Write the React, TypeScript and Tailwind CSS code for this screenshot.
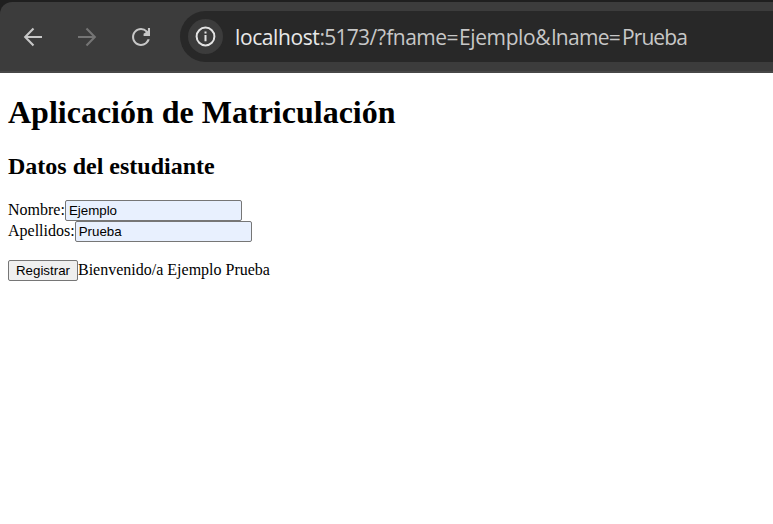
function BrowserBar() {
  return (
    <header className="h-[73px] bg-[#1f1f1f] pt-[2px]">
      <div className="flex h-[71px] items-start overflow-hidden rounded-tl-[12px] border-b-2 border-[#474747] bg-[#3c3c3c] pt-[9px]">
        <nav className="flex h-[51px] w-[180px] shrink-0 items-center gap-[30px] pl-[21px]">
          <svg className="size-6 text-[#c7c7c7]" viewBox="0 0 24 24" fill="none" stroke="currentColor" strokeWidth="2.1">
            <path d="M21 12H4.5M12.5 3.6L4.2 12l8.3 8.4" />
          </svg>
          <svg className="size-6 text-[#757575]" viewBox="0 0 24 24" fill="none" stroke="currentColor" strokeWidth="2.1">
            <path d="M3 12h16.5M11.5 3.6l8.3 8.4-8.3 8.4" />
          </svg>
          <svg className="size-6 text-[#c7c7c7]" viewBox="1.3 1.3 21.4 21.4" fill="currentColor">
            <path d="M17.65 6.35A7.96 7.96 0 0 0 12 4c-4.42 0-7.99 3.58-7.99 8s3.57 8 7.99 8c3.73 0 6.84-2.55 7.73-6h-2.02A6.15 6.15 0 0 1 12 18.15c-3.4 0-6.15-2.75-6.15-6.15s2.75-6.15 6.15-6.15c1.7 0 3.2.7 4.3 1.85L14.3 9.2V11H20V4h-1.8v2.9z" />
          </svg>
        </nav>
        <div className="flex h-[51px] flex-1 items-center rounded-l-full bg-[#282828] pl-2">
          <span className="flex size-[35px] shrink-0 items-center justify-center rounded-full bg-[#3c3c3c]">
            <svg className="size-[21px] text-[#e3e3e3]" viewBox="0 0 21 21" fill="none" stroke="currentColor">
              <circle cx="10.5" cy="10.5" r="8.9" strokeWidth="2" />
              <path d="M10.5 9v6.2M10.5 5.6v2" strokeWidth="2" />
            </svg>
          </span>
          <div className="ml-[12px] whitespace-nowrap font-['Open_Sans',sans-serif] text-[21px] leading-[30px] text-[#c7c7c7]">
            <span className="tracking-[-0.4px] text-[#e8e8e8]">localhost</span>
            <span className="tracking-[-0.7px]">:5173</span>
            <span>/?</span>
            <span className="tracking-[-0.5px]">fname</span>
            <span className="tracking-[0.5px]">=</span>
            <span className="tracking-[-0.4px]">Ejemplo</span>
            <span className="tracking-[0.6px]">&amp;</span>
            <span className="tracking-[-0.7px]">lname</span>
            <span className="tracking-[1.2px]">=</span>
            <span className="tracking-[-0.9px]">Prueba</span>
          </div>
        </div>
      </div>
    </header>
  );
}

function Field({ label, name, value }: { label: string; name: string; value: string }) {
  return (
    <div className="flex h-[21px] items-center">
      <label htmlFor={name} className="pb-[2px] leading-[18px]">{label}</label>
      <input
        id={name}
        name={name}
        defaultValue={value}
        className="h-[21px] w-[177px] rounded-[2px] border border-[#767676] bg-[#e8f0fe] px-[3px] py-px font-['Liberation_Sans',sans-serif] text-[13.333px] leading-[15px] text-black outline-none"
      />
    </div>
  );
}

export default function App() {
  return (
    <div className="min-h-screen bg-white font-['Liberation_Serif',serif] text-base text-black">
      <BrowserBar />
      <main className="px-2">
        <h1 className="pt-[21px] text-[32px] leading-[37px] font-bold">Aplicación de Matriculación</h1>
        <h2 className="mt-[21px] text-2xl leading-[28px] font-bold">Datos del estudiante</h2>
        <form className="mt-[20px]">
          <Field label="Nombre:" name="fname" value="Ejemplo" />
          <Field label="Apellidos:" name="lname" value="Prueba" />
          <div className="mt-[18px] flex h-[21px] items-center">
            <button
              type="button"
              className="h-[21px] w-[70px] rounded-[2px] border border-[#767676] bg-[#efefef] font-['Liberation_Sans',sans-serif] text-[13.333px] leading-[15px]"
            >
              Registrar
            </button>
            <span className="pb-[2px] leading-[18px]">Bienvenido/a Ejemplo Prueba</span>
          </div>
        </form>
      </main>
    </div>
  );
}
